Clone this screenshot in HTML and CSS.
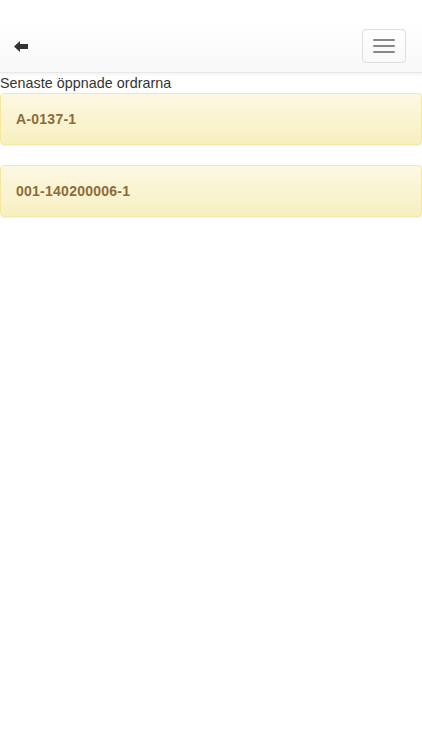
FILE: index.html
```html
<!DOCTYPE html>
<html lang="sv">
<head>
<meta charset="utf-8">
<title>Senaste öppnade ordrarna</title>
<link rel="stylesheet" href="styles.css">
</head>
<body>
<header class="navbar">
  <div class="navbar-inner">
    <a class="back" href="#" aria-label="Tillbaka">
      <svg width="14" height="11" viewBox="0 0 14 11"><path d="M0 5.5 L6 0 L6 3 L14 3 L14 8 L6 8 L6 11 Z" fill="#333"/></svg>
    </a>
    <button class="toggle" type="button" aria-label="Meny">
      <span class="bar"></span><span class="bar"></span><span class="bar"></span>
    </button>
  </div>
</header>
<main class="content">
  <div class="title">Senaste öppnade ordrarna</div>
  <div class="alert">A-0137-1</div>
  <div class="alert">001-140200006-1</div>
</main>
</body>
</html>
```
FILE: styles.css
```css
* { box-sizing: border-box; }
html, body { margin: 0; padding: 0; background: #fff; }
body {
  font-family: "Liberation Sans", Arial, Helvetica, sans-serif;
  font-size: 14px;
  line-height: 20px;
  color: #333;
}
.navbar {
  padding-top: 21px;
  height: 73px;
  background: linear-gradient(to bottom, #fff 0, #fff 30%, #f8f8f8 100%);
  border-bottom: 1px solid #e7e7e7;
  box-shadow: 0 1px 5px rgba(0,0,0,.075);
  position: relative;
}
.navbar-inner {
  height: 51px;
  display: flex;
  align-items: center;
  justify-content: space-between;
  padding: 0 16px 0 14px;
}
.back { display: flex; align-items: center; margin-top: 0; }
.back svg { display: block; }
.toggle {
  width: 44px;
  height: 34px;
  margin-top: -1px;
  padding: 9px 10px;
  border: 1px solid #ddd;
  border-radius: 4px;
  background: transparent;
  display: flex;
  flex-direction: column;
  gap: 4px;
  cursor: pointer;
}
.bar {
  display: block;
  width: 22px;
  height: 2px;
  border-radius: 1px;
  background: #888;
}
.title { height: 20px; font-size: 14.3px; letter-spacing: 0.05px; }
.alert {
  height: 52px;
  padding: 15px;
  margin-bottom: 20px;
  border: 1px solid #f5e79e;
  border-radius: 4px;
  background: linear-gradient(to bottom, #fcf8e3 0, #f8efc0 100%);
  box-shadow: inset 0 1px 0 rgba(255,255,255,.25), 0 1px 2px rgba(0,0,0,.05);
  color: #8a6d3b;
  font-weight: bold;
  letter-spacing: 0.25px;
  width: 422px;
}
```
